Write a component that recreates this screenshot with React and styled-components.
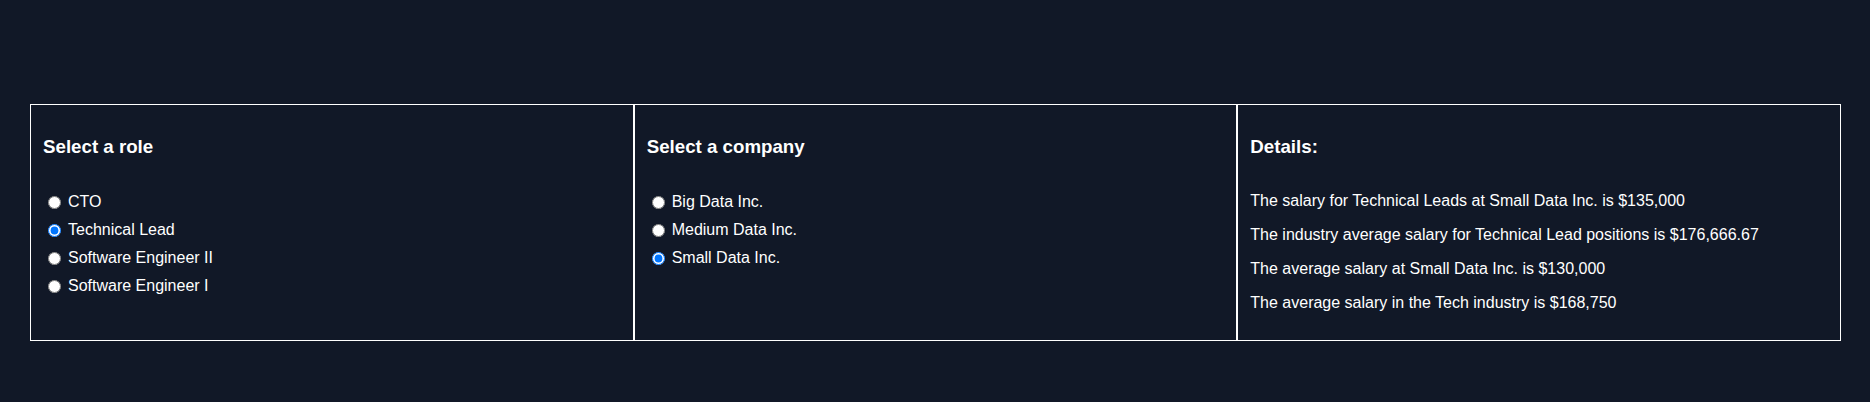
import React, { useState } from "react";
import styled, { createGlobalStyle } from "styled-components";

const GlobalStyle = createGlobalStyle`
  html, body {
    margin: 0;
    padding: 0;
    background: #111827;
  }
  body {
    font-family: "Liberation Sans", Arial, sans-serif;
    font-size: 16px;
    color: #ffffff;
  }
`;

const Page = styled.div`
  min-height: 402px;
  box-sizing: border-box;
  padding: 104px 29px 0 30px;
  background: #111827;
`;

const Panels = styled.div`
  display: grid;
  grid-template-columns: repeat(3, 1fr);
`;

const Panel = styled.section`
  display: flex;
  flex-direction: column;
  padding: 12px;
  border: 1px solid #ffffff;
  min-width: 0;
`;

const Heading = styled.h3`
  margin: 18.72px 0;
  font-size: 18.72px;
  font-weight: bold;
  line-height: normal;
`;

const OptionList = styled.div`
  display: flex;
  flex-direction: column;
  margin-top: 12px;
`;

const Option = styled.label`
  display: flex;
  align-items: center;
  padding: 5px 0;
  line-height: normal;
  cursor: pointer;
`;

const Radio = styled.input`
  width: 13px;
  height: 13px;
  margin: 0 7px 0 5px;
`;

const DetailsBody = styled.div``;

const Line = styled.p`
  margin: 16px 0;
  line-height: normal;
`;

const roles = ["CTO", "Technical Lead", "Software Engineer II", "Software Engineer I"];
const companies = ["Big Data Inc.", "Medium Data Inc.", "Small Data Inc."];

export default function App() {
  const [role, setRole] = useState("Technical Lead");
  const [company, setCompany] = useState("Small Data Inc.");

  return (
    <>
      <GlobalStyle />
      <Page>
        <Panels>
          <Panel>
            <Heading>Select a role</Heading>
            <OptionList>
              {roles.map((r) => (
                <Option key={r}>
                  <Radio
                    type="radio"
                    name="role"
                    checked={role === r}
                    onChange={() => setRole(r)}
                  />
                  {r}
                </Option>
              ))}
            </OptionList>
          </Panel>
          <Panel>
            <Heading>Select a company</Heading>
            <OptionList>
              {companies.map((c) => (
                <Option key={c}>
                  <Radio
                    type="radio"
                    name="company"
                    checked={company === c}
                    onChange={() => setCompany(c)}
                  />
                  {c}
                </Option>
              ))}
            </OptionList>
          </Panel>
          <Panel>
            <Heading>Details:</Heading>
            <DetailsBody>
              <Line>The salary for Technical Leads at Small Data Inc. is $135,000</Line>
              <Line>The industry average salary for Technical Lead positions is $176,666.67</Line>
              <Line>The average salary at Small Data Inc. is $130,000</Line>
              <Line>The average salary in the Tech industry is $168,750</Line>
            </DetailsBody>
          </Panel>
        </Panels>
      </Page>
    </>
  );
}
